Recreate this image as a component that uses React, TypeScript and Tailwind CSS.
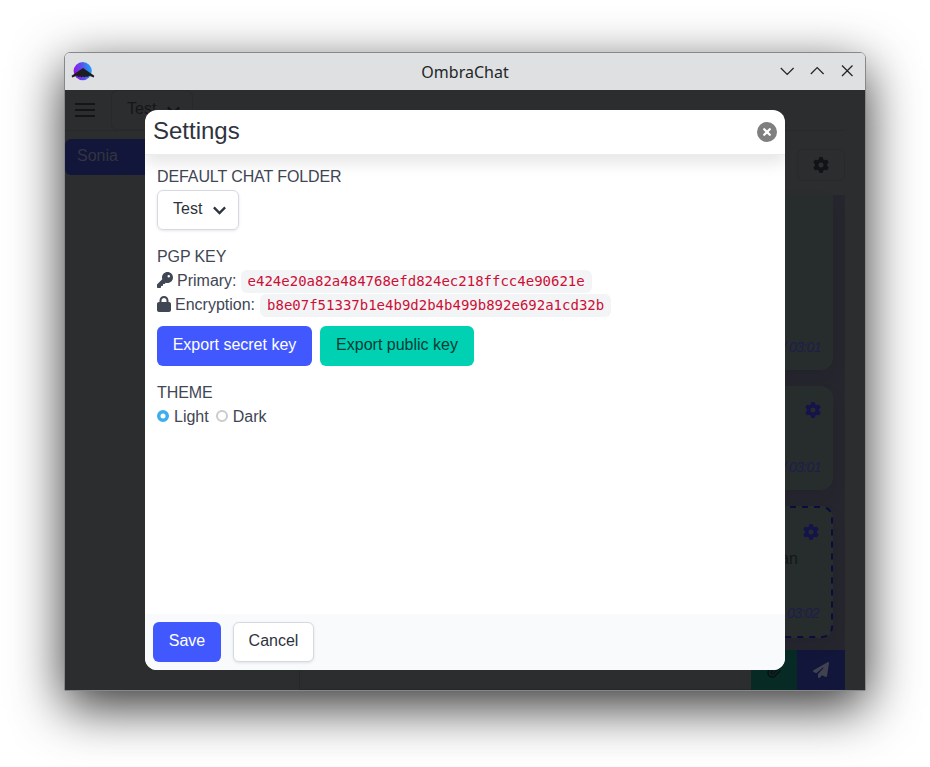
import type { ReactNode } from "react";
import { FaGear, FaKey, FaLock, FaPaperclip, FaPaperPlane } from "react-icons/fa6";

function Logo() {
  return (
    <svg width="24" height="20" viewBox="0 0 24 20">
      <defs>
        <linearGradient id="orb" x1="0" y1="0.6" x2="1" y2="0.4">
          <stop offset="0" stopColor="#9a0fe6" />
          <stop offset="0.5" stopColor="#5b50ee" />
          <stop offset="1" stopColor="#1ba5f5" />
        </linearGradient>
      </defs>
      <circle cx="11.700" cy="9.1" r="9.1" fill="url(#orb)" />
      <path d="M12 6L23.3 13.8L22.700 15.500L18.200 13.8L16.600 15L14.8 14.600L13.4 15.4L12 14.6L10.6 15.4L9.2 14.6L7.4 15L5.8 13.8L1.1 15.5L0.6 13.8Z" fill="#1d1e22" />
    </svg>
  );
}

function Chevron() {
  return (
    <svg className="mt-[4px]" width="13" height="9" viewBox="0 0 13 9" fill="none" stroke="currentColor" strokeWidth="2.3">
      <path d="M.9 1.400L6.500 7L12.100 1.400" />
    </svg>
  );
}

function Radio({ color, ring }: { color: string; ring: number }) {
  return (
    <svg className="mb-[2px] mr-[5px]" width="12" height="12" viewBox="0 0 12 12" fill="none">
      <circle cx="6" cy="6" r={6 - ring / 2} stroke={color} strokeWidth={ring} />
    </svg>
  );
}

function TitleBar() {
  return (
    <div className="flex h-[37px] items-center justify-between rounded-t-[5px] bg-[#dee0e2] pl-[6px] pr-[10px] text-[#232629]">
      <div className="flex w-[79px]"><Logo /></div>
      <span className="pt-px font-['Noto_Sans',sans-serif] text-[16px] leading-5">OmbraChat</span>
      <svg className="mb-[2px] w-[75px]" width="75" height="16" viewBox="0 0 75 16" fill="none" stroke="currentColor" strokeWidth="1.25">
        <path d="M.8 5l6.4 6.4L13.600 5M30.800 11l6.400-6.400L43.600 11M62 2.500l10.500 10.500M72.500 2.500L62 13" />
      </svg>
    </div>
  );
}

function Bubble({ className, time, gear, children }: { className: string; time: string; gear?: boolean; children?: ReactNode }) {
  return (
    <div className={"relative flex flex-col items-end rounded-[12px] bg-[#272d2c] shadow-[0_8px_16px_rgba(10,10,20,0.08)] " + className}>
      {gear && <FaGear className="mt-4 size-4 shrink-0 text-[#14144a]" />}
      {children}
      <span className="mt-auto text-[14px] italic leading-5 tracking-[-0.6px] text-[#1b1d4c]">{time}</span>
    </div>
  );
}

function Backdrop() {
  return (
    <div className="flex h-full flex-col bg-[#2c2d2e]">
      <div className="mr-5 flex h-[41px] shrink-0 border-b border-[#28292a]">
        <div className="ml-[10px] mt-[13px] flex h-[14px] w-5 flex-col justify-between">
          <i className="h-[2px] bg-[#141517]" />
          <i className="h-[2px] bg-[#141517]" />
          <i className="h-[2px] bg-[#141517]" />
        </div>
        <div className="ml-4 flex h-[40px] w-[82px] items-center rounded-md border border-[#28292b] pb-[3px] pl-[15px] text-[#151618]">
          <span className="w-10">Test</span>
          <Chevron />
        </div>
      </div>
      <div className="flex min-h-0 flex-1">
        <div className="w-[235px] shrink-0 border-r border-[#262728] pt-2">
          <div className="h-9 rounded-md bg-[#12163a] pl-3 leading-[33px] text-[#33353f]">Sonia</div>
        </div>
        <div className="mr-5 flex min-w-0 flex-1 flex-col">
          <div className="flex h-[64px] shrink-0 justify-end pt-[18px]">
            <div className="flex h-8 w-12 items-center justify-center rounded-md border border-[#28292b] text-[#111316]">
              <FaGear className="size-4" />
            </div>
          </div>
          <div className="flex min-h-0 flex-1 flex-col gap-4 bg-[#25262e] px-3">
            <Bubble className="h-[175px] rounded-t-none px-3 pb-[13px]" time="/ 03:01" />
            <Bubble className="h-[104px] px-3 pb-[13px]" time="/ 03:01" gear />
            <Bubble className="h-[132px] px-[14px] pb-[15px] pt-[2px]" time="/ 03:02" gear>
              <span className="mr-[21px] mt-[7px] leading-6 text-[#141719]">plan</span>
              <svg className="absolute right-0 top-0" width="60" height="132" viewBox="0 0 60 132" fill="none" stroke="#0b0b3c" strokeWidth="2" strokeDasharray="6 6">
                <path d="M5 1H49A10 10 0 0 1 59 11V121A10 10 0 0 1 49 131H5" />
              </svg>
            </Bubble>
          </div>
          <div className="flex h-10 shrink-0">
            <div className="flex-1 border-b border-[#252627]" />
            <div className="flex w-[46px] items-center justify-center bg-[#082a25] text-[#0a1214]"><FaPaperclip className="size-4" /></div>
            <div className="flex w-12 items-center justify-center bg-[#12163a] text-[#40424f]"><FaPaperPlane className="size-4" /></div>
          </div>
        </div>
      </div>
    </div>
  );
}

function SettingsModal() {
  return (
    <div className="flex h-[560px] w-[640px] flex-col overflow-hidden rounded-[12px] bg-white text-[#404654]">
      <header className="relative flex h-[45px] shrink-0 items-center justify-between border-b border-[#ececed] px-2 shadow-[0_8px_16px_rgba(10,10,10,0.1)]">
        <h1 className="pb-[3px] text-[24px] leading-6 text-[#2e333d]">Settings</h1>
        <svg width="20" height="20" viewBox="0 0 20 20">
          <circle cx="10" cy="10" r="10" fill="#7f7f7f" />
          <path d="M7.200 7.200l5.600 5.600M12.800 7.200l-5.600 5.600" stroke="white" strokeWidth="2.300" strokeLinecap="round" />
        </svg>
      </header>
      <div className="flex-1 p-3 pt-[10px] leading-6">
        <div className="tracking-[-0.1px]">DEFAULT CHAT FOLDER</div>
        <div className="mt-px flex h-10 w-[82px] items-center rounded-md border border-[#d6d9e0] pb-[3px] pl-[15px] text-[#2e333d] shadow-[0_1px_3px_rgba(10,10,20,0.1)]">
          <span className="w-10">Test</span>
          <Chevron />
        </div>
        <div className="mt-[15px] tracking-[-0.1px]">PGP KEY</div>
        <div className="flex h-6 items-center">
          <FaKey className="mb-[2px] mr-1 size-4" />
          Primary:
          <code className="ml-1 h-[23px] rounded-md bg-[#f3f4f6] px-[7px] font-['DejaVu_Sans_Mono',monospace] text-[14px] leading-[22px] text-[#cc0f35]">e424e20a82a484768efd824ec218ffcc4e90621e</code>
        </div>
        <div className="flex h-6 items-center">
          <FaLock className="mb-[2px] mr-1 h-4 w-[14px]" />
          Encryption:
          <code className="ml-[5px] h-[23px] rounded-md bg-[#f3f4f6] px-[7px] font-['DejaVu_Sans_Mono',monospace] text-[14px] leading-[22px] text-[#cc0f35]">b8e07f51337b1e4b9d2b4b499b892e692a1cd32b</code>
        </div>
        <div className="mt-[9px] flex gap-2">
          <button className="h-10 w-[155px] rounded-md bg-[#4258ff] pb-[3px] text-white">Export secret key</button>
          <button className="h-10 w-[154px] rounded-md bg-[#00d1b2] pb-[3px] text-[#043b35]">Export public key</button>
        </div>
        <div className="mt-[15px] tracking-[-0.1px]">THEME</div>
        <div className="flex h-6 items-center">
          <Radio color="#3daee9" ring={3.5} />
          <span className="mr-[7px]">Light</span>
          <Radio color="#cbcbcb" ring={2} />
          <span>Dark</span>
        </div>
      </div>
      <footer className="flex h-14 shrink-0 gap-3 bg-[#f9fafc] p-2">
        <button className="h-10 w-[68px] rounded-md bg-[#4258ff] pb-[3px] text-white">Save</button>
        <button className="h-10 w-[81px] rounded-md border border-[#d6d9e0] bg-white pb-[3px] text-[#2e333d] shadow-[0_1px_3px_rgba(10,10,20,0.1)]">Cancel</button>
      </footer>
    </div>
  );
}

export default function App() {
  return (
    <div className="flex h-[767px] w-[930px] overflow-hidden bg-white px-16 pt-[52px] font-['Liberation_Sans',Arial,sans-serif] text-[16px]">
      <div className="h-[639px] w-[802px] rounded-t-[6px] border border-[#87888a] shadow-[0_16px_52px_rgba(0,0,0,0.8)]">
        <TitleBar />
        <div className="relative h-[600px]">
          <Backdrop />
          <div className="absolute inset-0 flex items-center justify-center">
            <SettingsModal />
          </div>
        </div>
      </div>
    </div>
  );
}
